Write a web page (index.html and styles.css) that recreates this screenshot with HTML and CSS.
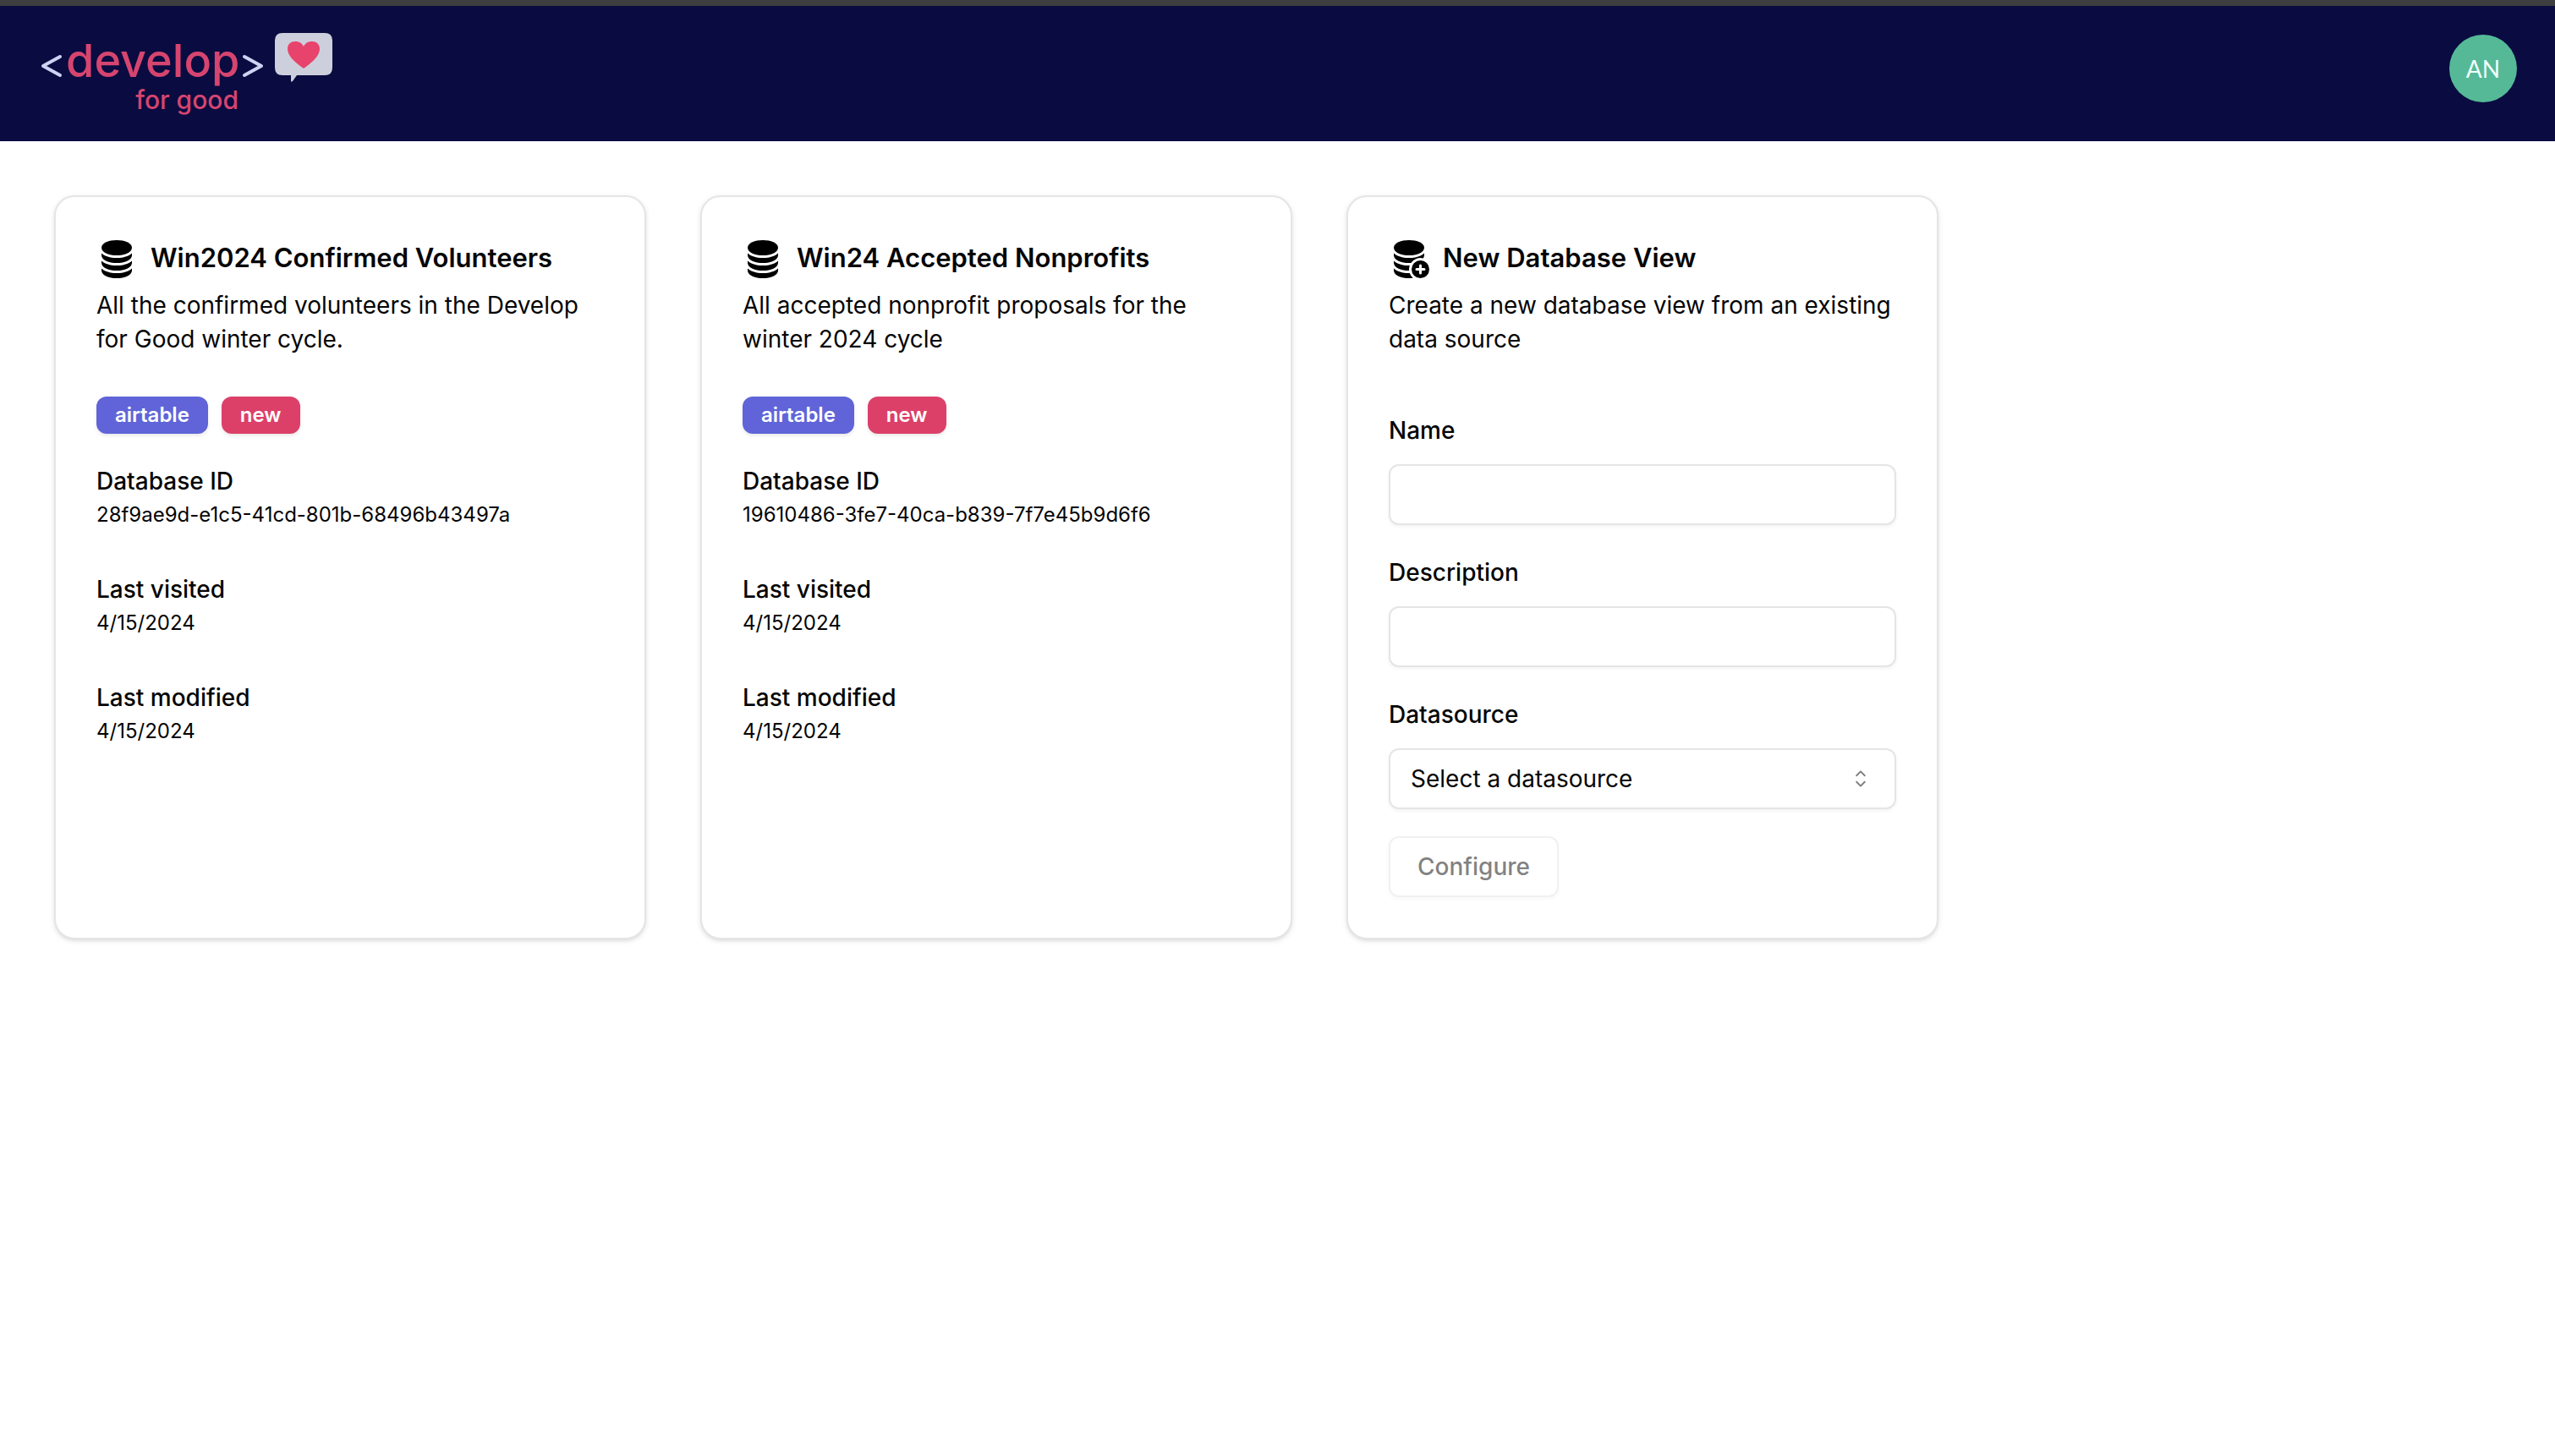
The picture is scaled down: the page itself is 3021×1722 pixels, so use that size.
FILE: index.html
```html
<!DOCTYPE html>
<html lang="en">
<head>
  <meta charset="utf-8">
  <meta name="viewport" content="width=device-width, initial-scale=1">
  <title>Develop for Good</title>
  <link rel="stylesheet" href="styles.css">
</head>
<body>
  <svg class="sprite" aria-hidden="true">
    <symbol id="icon-database" viewBox="0 0 16 16">
      <path d="M3.904 1.777C4.978 1.289 6.427 1 8 1s3.022.289 4.096.777C13.125 2.245 14 2.993 14 4s-.875 1.755-1.904 2.223C11.022 6.711 9.573 7 8 7s-3.022-.289-4.096-.777C2.875 5.755 2 5.007 2 4s.875-1.755 1.904-2.223"/>
      <path d="M2 6.161V7c0 1.007.875 1.755 1.904 2.223C4.978 9.71 6.427 10 8 10s3.022-.289 4.096-.777C13.125 8.755 14 8.007 14 7v-.839c-.457.432-1.004.751-1.49.972C11.278 7.693 9.682 8 8 8s-3.278-.307-4.51-.867c-.486-.22-1.033-.54-1.49-.972"/>
      <path d="M2 9.161V10c0 1.007.875 1.755 1.904 2.223C4.978 12.711 6.427 13 8 13s3.022-.289 4.096-.777C13.125 11.755 14 11.007 14 10v-.839c-.457.432-1.004.751-1.49.972-1.232.56-2.828.867-4.51.867s-3.278-.307-4.51-.867c-.486-.22-1.033-.54-1.49-.972"/>
      <path d="M2 12.161V13c0 1.007.875 1.755 1.904 2.223C4.978 15.711 6.427 16 8 16s3.022-.289 4.096-.777C13.125 14.755 14 14.007 14 13v-.839c-.457.432-1.004.751-1.49.972-1.232.56-2.828.867-4.51.867s-3.278-.307-4.51-.867c-.486-.22-1.033-.54-1.49-.972"/>
    </symbol>
    <symbol id="icon-database-add" viewBox="0 0 16 16">
      <path d="M8 1c-1.573 0-3.022.289-4.096.777C2.875 2.245 2 2.993 2 4s.875 1.755 1.904 2.223C4.978 6.711 6.427 7 8 7s3.022-.289 4.096-.777C13.125 5.755 14 5.007 14 4s-.875-1.755-1.904-2.223C11.022 1.289 9.573 1 8 1"/>
      <path d="M2 7v-.839c.457.432 1.004.751 1.49.972C4.722 7.693 6.318 8 8 8s3.278-.307 4.51-.867c.486-.22 1.033-.54 1.49-.972V7c0 .424-.155.802-.411 1.133a4.51 4.51 0 0 0-4.815 1.843A12 12 0 0 1 8 10c-1.573 0-3.022-.289-4.096-.777C2.875 8.755 2 8.007 2 7m6.257 3.998L8 11c-1.682 0-3.278-.307-4.51-.867-.486-.22-1.033-.54-1.49-.972V10c0 1.007.875 1.755 1.904 2.223C4.978 12.711 6.427 13 8 13h.027a4.55 4.55 0 0 1 .23-2.002m-.002 3L8 14c-1.682 0-3.278-.307-4.51-.867-.486-.22-1.033-.54-1.49-.972V13c0 1.007.875 1.755 1.904 2.223C4.978 15.711 6.427 16 8 16c.536 0 1.058-.034 1.555-.097a4.5 4.5 0 0 1-1.3-1.905"/>
      <path d="M12.5 16a3.5 3.5 0 1 0 0-7 3.5 3.5 0 0 0 0 7m.5-5v1h1a.5.5 0 0 1 0 1h-1v1a.5.5 0 0 1-1 0v-1h-1a.5.5 0 0 1 0-1h1v-1a.5.5 0 0 1 1 0"/>
    </symbol>
    <symbol id="icon-caret-sort" viewBox="0 0 15 15">
      <path fill-rule="evenodd" d="M4.93179 5.43179C4.75605 5.60753 4.75605 5.89245 4.93179 6.06819C5.10753 6.24392 5.39245 6.24392 5.56819 6.06819L7.49999 4.13638L9.43179 6.06819C9.60753 6.24392 9.89245 6.24392 10.0682 6.06819C10.2439 5.89245 10.2439 5.60753 10.0682 5.43179L7.81819 3.18179C7.73379 3.0974 7.61933 3.04999 7.49999 3.04999C7.38064 3.04999 7.26618 3.0974 7.18179 3.18179L4.93179 5.43179ZM10.0682 9.56819C10.2439 9.39245 10.2439 9.10753 10.0682 8.93179C9.89245 8.75606 9.60753 8.75606 9.43179 8.93179L7.49999 10.8636L5.56819 8.93179C5.39245 8.75606 5.10753 8.75606 4.93179 8.93179C4.75605 9.10753 4.75605 9.39245 4.93179 9.56819L7.18179 11.8182C7.35753 11.9939 7.64245 11.9939 7.81819 11.8182L10.0682 9.56819Z"/>
    </symbol>
  </svg>

  <header class="site-header">
    <a class="logo" href="#">
      <svg class="logo-art" viewBox="0 0 346 100" role="img" aria-label="Develop for Good">
        <path class="logo-bracket" d="M23 26 L3 37 L23 48"/>
        <text class="logo-name" x="30" y="50">develop</text>
        <path class="logo-bracket" d="M241 26 L261 37 L241 48"/>
        <text class="logo-tagline" x="234" y="88" text-anchor="end">for good</text>
        <path class="logo-bubble" d="M286 -2 H336 Q345 -2 345 7 V39 Q345 48 336 48 H303 L298 55 Q296 57 296 54 V48 H286 Q277 48 277 39 V7 Q277 -2 286 -2 Z"/>
        <path class="logo-heart" d="M311 40 C303 34 292 26 292 17 C292 11 296 8 301 8 C306 8 309 10 311 14 C313 10 316 8 321 8 C326 8 330 11 330 17 C330 26 319 34 311 40 Z"/>
      </svg>
    </a>
    <button class="avatar" type="button" aria-label="Account menu">AN</button>
  </header>

  <main class="card-grid">
    <article class="card">
      <header class="card-header">
        <h2 class="card-title">
          <svg class="card-icon" aria-hidden="true"><use href="#icon-database"/></svg>
          Win2024 Confirmed Volunteers
        </h2>
        <p class="card-description">All the confirmed volunteers in the Develop for Good winter cycle.</p>
      </header>
      <div class="badges">
        <span class="badge badge-source">airtable</span>
        <span class="badge badge-new">new</span>
      </div>
      <dl class="details">
        <div class="detail"><dt>Database ID</dt><dd>28f9ae9d-e1c5-41cd-801b-68496b43497a</dd></div>
        <div class="detail"><dt>Last visited</dt><dd>4/15/2024</dd></div>
        <div class="detail"><dt>Last modified</dt><dd>4/15/2024</dd></div>
      </dl>
    </article>

    <article class="card">
      <header class="card-header">
        <h2 class="card-title">
          <svg class="card-icon" aria-hidden="true"><use href="#icon-database"/></svg>
          Win24 Accepted Nonprofits
        </h2>
        <p class="card-description">All accepted nonprofit proposals for the winter 2024 cycle</p>
      </header>
      <div class="badges">
        <span class="badge badge-source">airtable</span>
        <span class="badge badge-new">new</span>
      </div>
      <dl class="details">
        <div class="detail"><dt>Database ID</dt><dd>19610486-3fe7-40ca-b839-7f7e45b9d6f6</dd></div>
        <div class="detail"><dt>Last visited</dt><dd>4/15/2024</dd></div>
        <div class="detail"><dt>Last modified</dt><dd>4/15/2024</dd></div>
      </dl>
    </article>

    <article class="card">
      <header class="card-header">
        <h2 class="card-title">
          <svg class="card-icon" aria-hidden="true"><use href="#icon-database-add"/></svg>
          New Database View
        </h2>
        <p class="card-description">Create a new database view from an existing data source</p>
      </header>
      <form class="view-form">
        <div class="field">
          <label for="view-name">Name</label>
          <input class="control" id="view-name" type="text">
        </div>
        <div class="field">
          <label for="view-description">Description</label>
          <input class="control" id="view-description" type="text">
        </div>
        <div class="field">
          <label for="view-datasource">Datasource</label>
          <div class="select">
            <select class="control" id="view-datasource">
              <option>Select a datasource</option>
            </select>
            <svg class="select-icon" aria-hidden="true"><use href="#icon-caret-sort"/></svg>
          </div>
        </div>
        <button class="submit" type="submit" disabled>Configure</button>
      </form>
    </article>
  </main>
</body>
</html>
```
FILE: styles.css
```css
:root {
  --ink: #050505;
  --line: #e5e5e5;
  --navy: #0a0b40;
}

* {
  box-sizing: border-box;
}

body {
  margin: 0;
  background: #fff;
  color: var(--ink);
  font-family: Inter, "Liberation Sans", sans-serif;
  font-size: 28px;
  line-height: 40px;
}

h2,
p,
dl,
dd {
  margin: 0;
}

input,
select,
button {
  font: inherit;
  color: inherit;
}

svg {
  display: block;
}

.sprite {
  display: none;
}

/* Header */

.site-header {
  display: flex;
  justify-content: space-between;
  align-items: flex-start;
  height: 167px;
  padding: 34px 45px 0 48px;
  border-top: 7px solid #3e3e40;
  background: var(--navy);
}

.logo-art {
  width: 346px;
  height: 100px;
  overflow: visible;
}

.logo-bracket {
  fill: none;
  stroke: #cdd3f2;
  stroke-width: 4;
  stroke-linecap: round;
  stroke-linejoin: round;
}

.logo-name,
.logo-tagline {
  fill: #d6456f;
  font-weight: 500;
}

.logo-name {
  font-size: 54px;
}

.logo-tagline {
  font-size: 30px;
}

.logo-bubble {
  fill: #cdd0dc;
}

.logo-heart {
  fill: #e8436c;
}

.avatar {
  width: 80px;
  height: 80px;
  padding: 0;
  border: 0;
  border-radius: 50%;
  background: #55b998;
  color: #f2fffb;
  font-family: Lato, "Open Sans", sans-serif;
}

/* Cards */

.card-grid {
  display: grid;
  grid-template-columns: repeat(auto-fill, minmax(min(700px, 100%), 700px));
  gap: 64px;
  padding: 64px;
}

.card {
  padding: 48px;
  border: 2px solid var(--line);
  border-radius: 24px;
  background: #fff;
  box-shadow: 0 2px 6px rgb(0 0 0 / 10%), 0 2px 4px -2px rgb(0 0 0 / 10%);
}

.card-header {
  display: grid;
  gap: 12px;
  padding-bottom: 48px;
}

.card-title {
  display: flex;
  align-items: center;
  gap: 16px;
  font-size: 31px;
  font-weight: 600;
  line-height: 48px;
}

.card-icon {
  flex: none;
  width: 48px;
  height: 48px;
}

.badges {
  display: flex;
  gap: 16px;
}

.badge {
  padding: 6px 22px;
  border-radius: 12px;
  color: #fff;
  font-size: 24px;
  font-weight: 600;
  line-height: 32px;
  box-shadow: 0 2px 4px rgb(0 0 0 / 10%);
}

.badge-source {
  background: #6064d8;
}

.badge-new {
  background: #dc4069;
}

.details {
  display: grid;
  gap: 48px;
  padding-top: 32px;
}

.detail dt {
  font-weight: 500;
  line-height: 48px;
}

.detail dd {
  font-size: 24px;
  line-height: 32px;
}

/* New view form */

.view-form {
  display: grid;
  justify-items: start;
  gap: 32px;
  padding-top: 16px;
}

.field {
  display: grid;
  gap: 16px;
  width: 100%;
}

.field label {
  font-weight: 500;
  line-height: 48px;
}

.control {
  width: 100%;
  height: 72px;
  padding: 0 24px;
  border: 2px solid var(--line);
  border-radius: 12px;
  background: #fff;
  box-shadow: 0 2px 4px rgb(0 0 0 / 5%);
}

.select {
  position: relative;
}

.select .control {
  appearance: none;
}

.select-icon {
  position: absolute;
  top: 20px;
  right: 26px;
  width: 32px;
  height: 32px;
  opacity: 0.5;
  pointer-events: none;
}

.submit {
  height: 72px;
  padding: 0 32px;
  border: 2px solid var(--line);
  border-radius: 12px;
  background: #fff;
  font-weight: 500;
  box-shadow: 0 2px 4px rgb(0 0 0 / 5%);
}

.submit:disabled {
  opacity: 0.5;
}
```
